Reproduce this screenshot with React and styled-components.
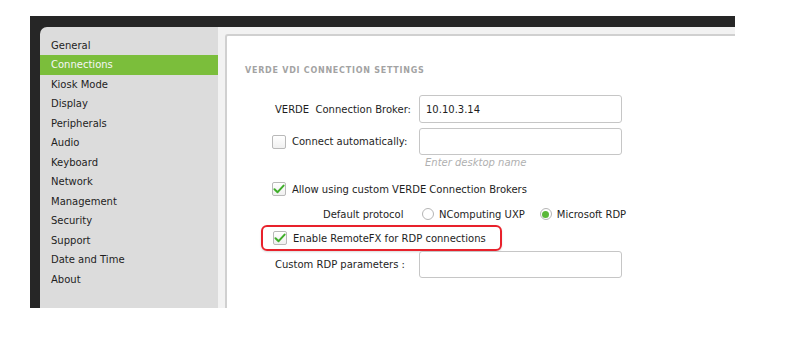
import React from "react";
import styled, { createGlobalStyle } from "styled-components";

const Global = createGlobalStyle`
  html, body { margin: 0; padding: 0; background: #ffffff; }
  body { font-family: "DejaVu Sans", "Liberation Sans", sans-serif; }
  * { box-sizing: border-box; }
`;

const Page = styled.div`
  padding: 16px 0 0 30px;
`;

const Window = styled.div`
  width: 705px;
  height: 292px;
  background: #262626;
  padding-top: 11px;
  display: flex;
  flex-direction: column;
`;

const Body = styled.div`
  flex: 1;
  margin-left: 10px;
  display: flex;
`;

const Sidebar = styled.ul`
  width: 178px;
  margin: 0;
  padding: 8.5px 0 0 0;
  list-style: none;
  background: #dcdcdc;
  border-top-left-radius: 7px;
`;

const MenuItem = styled.li`
  height: 19.5px;
  line-height: 19.5px;
  padding-left: 11px;
  font-size: 10px;
  color: ${(p) => (p.$active ? "#f6f6f6" : "#1e1e1e")};
  background: ${(p) => (p.$active ? "#7bbe3b" : "transparent")};
`;

const Main = styled.div`
  flex: 1;
  background: #f2f2f2;
  padding: 7px 0 0 7px;
  display: flex;
`;

const Panel = styled.div`
  flex: 1;
  background: #ffffff;
  border-top: 2px solid #d0d0d0;
  border-left: 2px solid #d0d0d0;
  border-top-left-radius: 3px;
  display: flex;
  flex-direction: column;
`;

const Heading = styled.div`
  margin: 29px 0 0 18px;
  height: 12px;
  line-height: 12px;
  font-size: 8px;
  font-weight: bold;
  letter-spacing: 0.75px;
  color: #a3a3a3;
`;

const Form = styled.div`
  padding-left: 34px;
  display: flex;
  flex-direction: column;
  font-size: 10px;
  color: #1e1e1e;
`;

const Row = styled.div`
  display: flex;
  align-items: center;
  height: ${(p) => p.$h || 18}px;
  margin-top: ${(p) => p.$mt || 0}px;
`;

const LabelCell = styled.div`
  width: 158px;
  display: flex;
  align-items: center;
  justify-content: ${(p) => (p.$right ? "flex-end" : "flex-start")};
  padding-right: ${(p) => (p.$right ? 8 : 0)}px;
  padding-left: ${(p) => p.$pl || 0}px;
  gap: 6px;
  white-space: nowrap;
`;

const Input = styled.div`
  width: 203px;
  height: 100%;
  border: 1px solid #c6c6c6;
  border-radius: 3px;
  background: #ffffff;
  padding-left: 6px;
  display: flex;
  align-items: center;
  font-size: 10px;
  color: #1e1e1e;
`;

const Hint = styled.div`
  margin: 1px 0 0 164px;
  height: 14px;
  line-height: 14px;
  font-size: 10px;
  font-style: italic;
  color: #b0b0b0;
`;

const CheckRow = styled.div`
  display: flex;
  align-items: center;
  gap: 6px;
  height: 18px;
  margin-top: ${(p) => p.$mt || 0}px;
  padding-left: 11px;
  white-space: nowrap;
`;

const Box = styled.span`
  width: 14px;
  height: 14px;
  flex: none;
  border: 1px solid #b9b9b9;
  border-radius: 2px;
  background: linear-gradient(#ffffff, #f0f0f0);
  display: flex;
  align-items: center;
  justify-content: center;
`;

const Highlight = styled.div`
  margin-top: 2px;
  width: 241px;
  height: 26px;
  border: 2px solid #e8212b;
  border-radius: 6px;
  box-shadow: 0 1px 2px rgba(0, 0, 0, 0.15);
  display: flex;
  align-items: center;
  padding-left: 10px;
  gap: 6px;
  white-space: nowrap;
`;

const ProtoRow = styled.div`
  display: flex;
  align-items: center;
  height: 18px;
  margin-top: 7px;
  white-space: nowrap;
`;

const ProtoLabel = styled.div`
  width: 62px;
  margin-left: 62px;
  margin-right: 37px;
`;

const RadioOption = styled.label`
  display: flex;
  align-items: center;
  gap: 5px;
  margin-right: ${(p) => p.$mr || 0}px;
`;

const RadioCircle = styled.span`
  width: 12px;
  height: 12px;
  flex: none;
  border-radius: 50%;
  border: 1px solid #b5b5b5;
  background: #ffffff;
  display: flex;
  align-items: center;
  justify-content: center;
  &::after {
    content: "";
    width: 7px;
    height: 7px;
    border-radius: 50%;
    background: ${(p) => (p.$on ? "#5bb83a" : "transparent")};
  }
`;

const Check = () => (
  <svg width="12" height="10" viewBox="0 0 12 10">
    <path d="M1.5 5.2 L4.6 8.2 L10.6 1.6" fill="none" stroke="#3fae2a" strokeWidth="2" strokeLinecap="round" strokeLinejoin="round" />
  </svg>
);

const items = [
  "General",
  "Connections",
  "Kiosk Mode",
  "Display",
  "Peripherals",
  "Audio",
  "Keyboard",
  "Network",
  "Management",
  "Security",
  "Support",
  "Date and Time",
  "About",
];

export default function App() {
  return (
    <>
      <Global />
      <Page>
        <Window>
          <Body>
            <Sidebar>
              {items.map((t) => (
                <MenuItem key={t} $active={t === "Connections"}>
                  {t}
                </MenuItem>
              ))}
            </Sidebar>
            <Main>
              <Panel>
                <Heading>VERDE VDI CONNECTION SETTINGS</Heading>
                <Form>
                  <Row $h={28} $mt={18}>
                    <LabelCell $right>VERDE&nbsp; Connection Broker:</LabelCell>
                    <Input>10.10.3.14</Input>
                  </Row>
                  <Row $h={27} $mt={5}>
                    <LabelCell $pl={11}>
                      <Box />
                      Connect automatically:
                    </LabelCell>
                    <Input />
                  </Row>
                  <Hint>Enter desktop name</Hint>
                  <CheckRow $mt={10}>
                    <Box>
                      <Check />
                    </Box>
                    Allow using custom VERDE Connection Brokers
                  </CheckRow>
                  <ProtoRow>
                    <ProtoLabel>Default protocol</ProtoLabel>
                    <RadioOption $mr={15}>
                      <RadioCircle />
                      NComputing UXP
                    </RadioOption>
                    <RadioOption>
                      <RadioCircle $on />
                      Microsoft RDP
                    </RadioOption>
                  </ProtoRow>
                  <Highlight>
                    <Box>
                      <Check />
                    </Box>
                    Enable RemoteFX for RDP connections
                  </Highlight>
                  <Row $h={27}>
                    <LabelCell $pl={14}>Custom RDP parameters :</LabelCell>
                    <Input />
                  </Row>
                </Form>
              </Panel>
            </Main>
          </Body>
        </Window>
      </Page>
    </>
  );
}
